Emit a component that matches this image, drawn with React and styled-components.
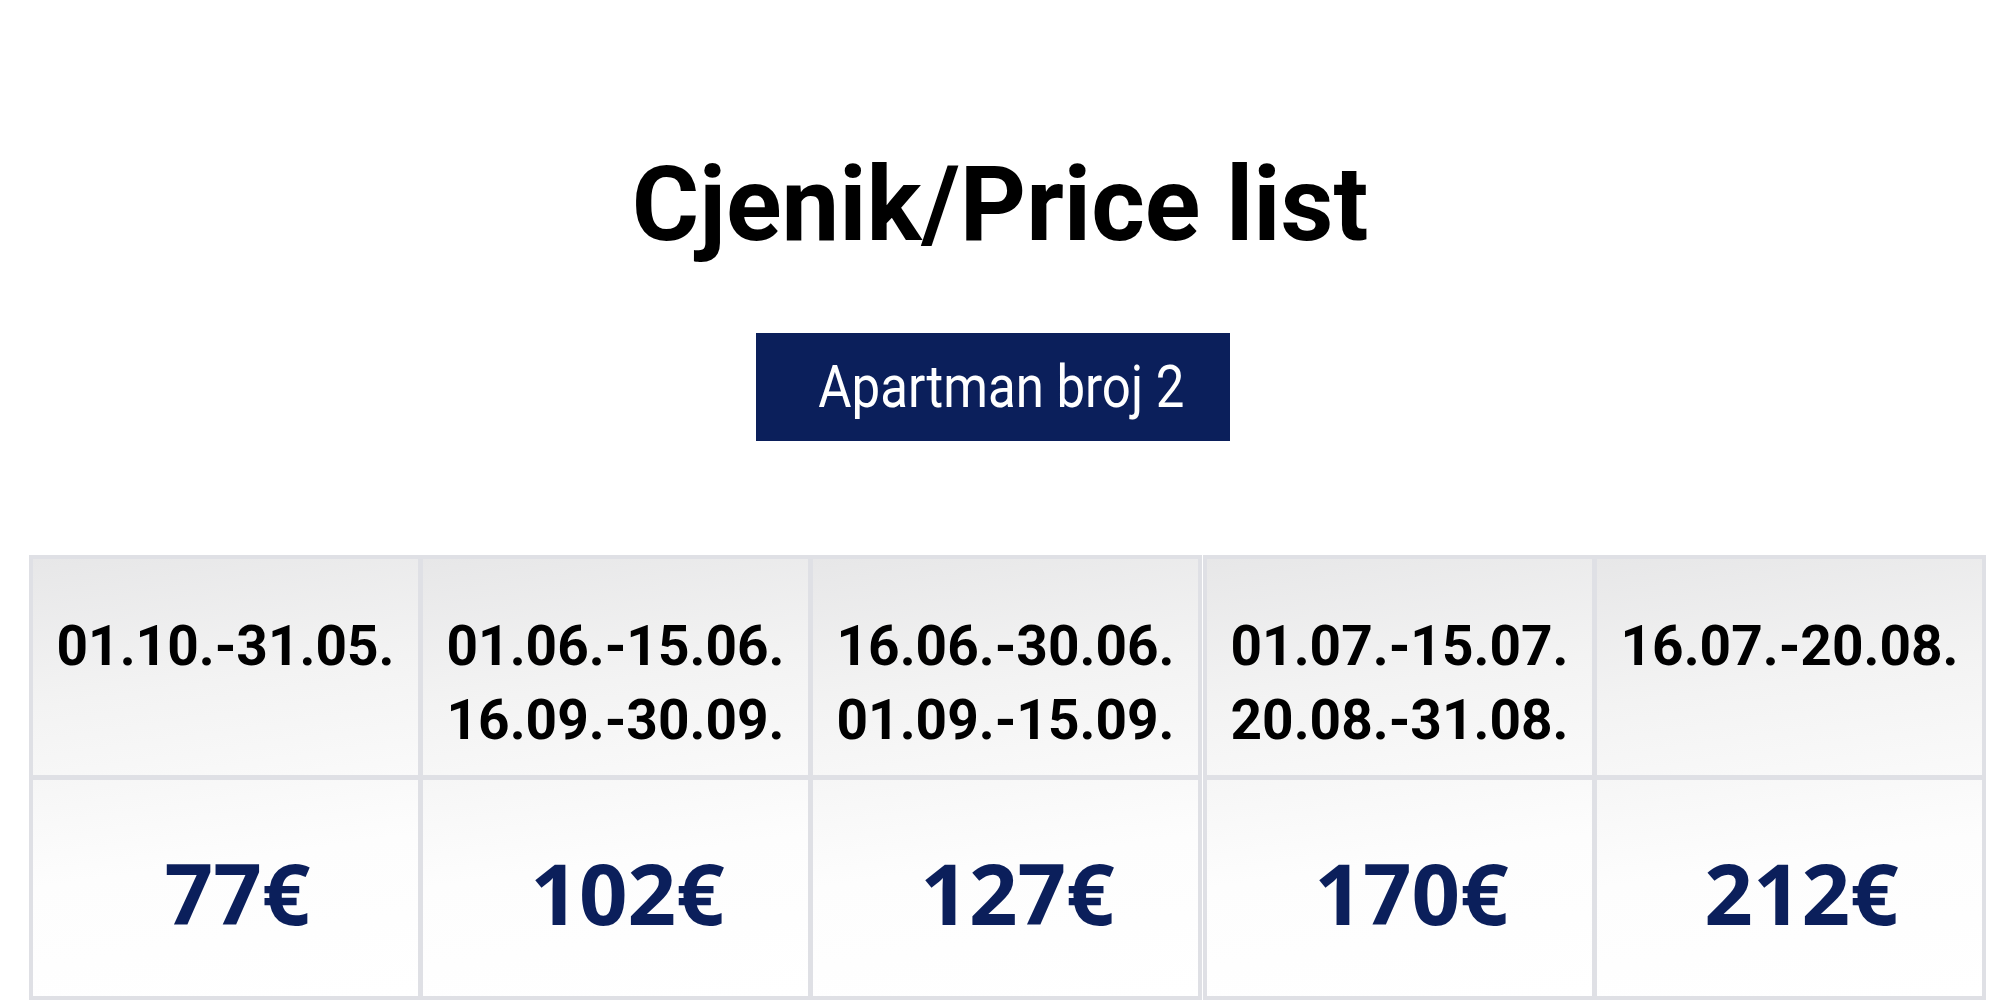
import React from "react";
import styled, { createGlobalStyle } from "styled-components";

const GlobalStyle = createGlobalStyle`
  html, body {
    margin: 0;
    padding: 0;
    background: #ffffff;
  }
  body {
    font-family: Roboto, "Liberation Sans", sans-serif;
    overflow: hidden;
  }
`;

const Page = styled.div`
  width: 2000px;
  height: 1000px;
  display: flex;
  flex-direction: column;
  align-items: center;
  padding-top: 142px;
  box-sizing: border-box;
`;

const Title = styled.h1`
  margin: 0;
  font-family: Roboto, "Liberation Sans", sans-serif;
  font-weight: 700;
  font-size: 103px;
  line-height: 125px;
  color: #000000;
`;

const ApartmentTag = styled.div`
  margin-top: 66px;
  margin-right: 14px;
  width: 474px;
  height: 108px;
  background: #0b1f5b;
  display: flex;
  align-items: center;
  justify-content: center;
  padding-left: 16px;
  box-sizing: border-box;
`;

const TagText = styled.span`
  display: inline-block;
  color: #ffffff;
  font-family: Roboto, "Liberation Sans", sans-serif;
  font-weight: 400;
  font-size: 60px;
  line-height: 1;
  white-space: nowrap;
  transform: scaleX(0.85);
`;

const Tables = styled.div`
  margin-top: 114px;
  align-self: stretch;
  margin-left: 29px;
  margin-right: 14px;
  display: flex;
  gap: 1px;
`;

// each block of seasons is its own small table, that is why the line in the middle is doubled
const PriceTable = styled.div`
  display: grid;
  grid-template-columns: repeat(${(p) => p.cols}, 385px);
  grid-template-rows: 216px 216px;
  gap: 5px;
  padding: 4px;
  background: #dfe0e5;
`;

const HeadCell = styled.div`
  background: linear-gradient(172deg, #e7e7e8 0%, #f3f3f3 55%, #fafafa 100%);
  padding-top: 50px;
  box-sizing: border-box;
  text-align: center;
  font-family: Roboto, "Liberation Sans", sans-serif;
  font-weight: 700;
  font-size: 55px;
  line-height: 74px;
  color: #000000;
`;

const PriceCell = styled.div`
  background: linear-gradient(172deg, #f6f6f6 0%, #fdfdfd 40%, #ffffff 100%);
  display: flex;
  align-items: center;
  justify-content: center;
  padding-left: 24px;
  padding-top: 8px;
  box-sizing: border-box;
  font-family: "Open Sans", "Noto Sans", sans-serif;
  font-weight: 700;
  font-size: 85px;
  color: #0b1f5b;
`;

const blocks = [
  [
    { dates: ["01.10.-31.05."], price: "77€" },
    { dates: ["01.06.-15.06.", "16.09.-30.09."], price: "102€" },
    { dates: ["16.06.-30.06.", "01.09.-15.09."], price: "127€" },
  ],
  [
    { dates: ["01.07.-15.07.", "20.08.-31.08."], price: "170€" },
    { dates: ["16.07.-20.08."], price: "212€" },
  ],
];

const App = () => {
  return (
    <>
      <GlobalStyle />
      <Page>
        <Title>Cjenik/Price list</Title>
        <ApartmentTag>
          <TagText>Apartman broj 2</TagText>
        </ApartmentTag>
        <Tables>
          {blocks.map((seasons, i) => (
            <PriceTable key={i} cols={seasons.length}>
              {seasons.map((s) => (
                <HeadCell key={s.price}>
                  {s.dates.map((d) => (
                    <div key={d}>{d}</div>
                  ))}
                </HeadCell>
              ))}
              {seasons.map((s) => (
                <PriceCell key={s.price}>{s.price}</PriceCell>
              ))}
            </PriceTable>
          ))}
        </Tables>
      </Page>
    </>
  );
};

export default App;
